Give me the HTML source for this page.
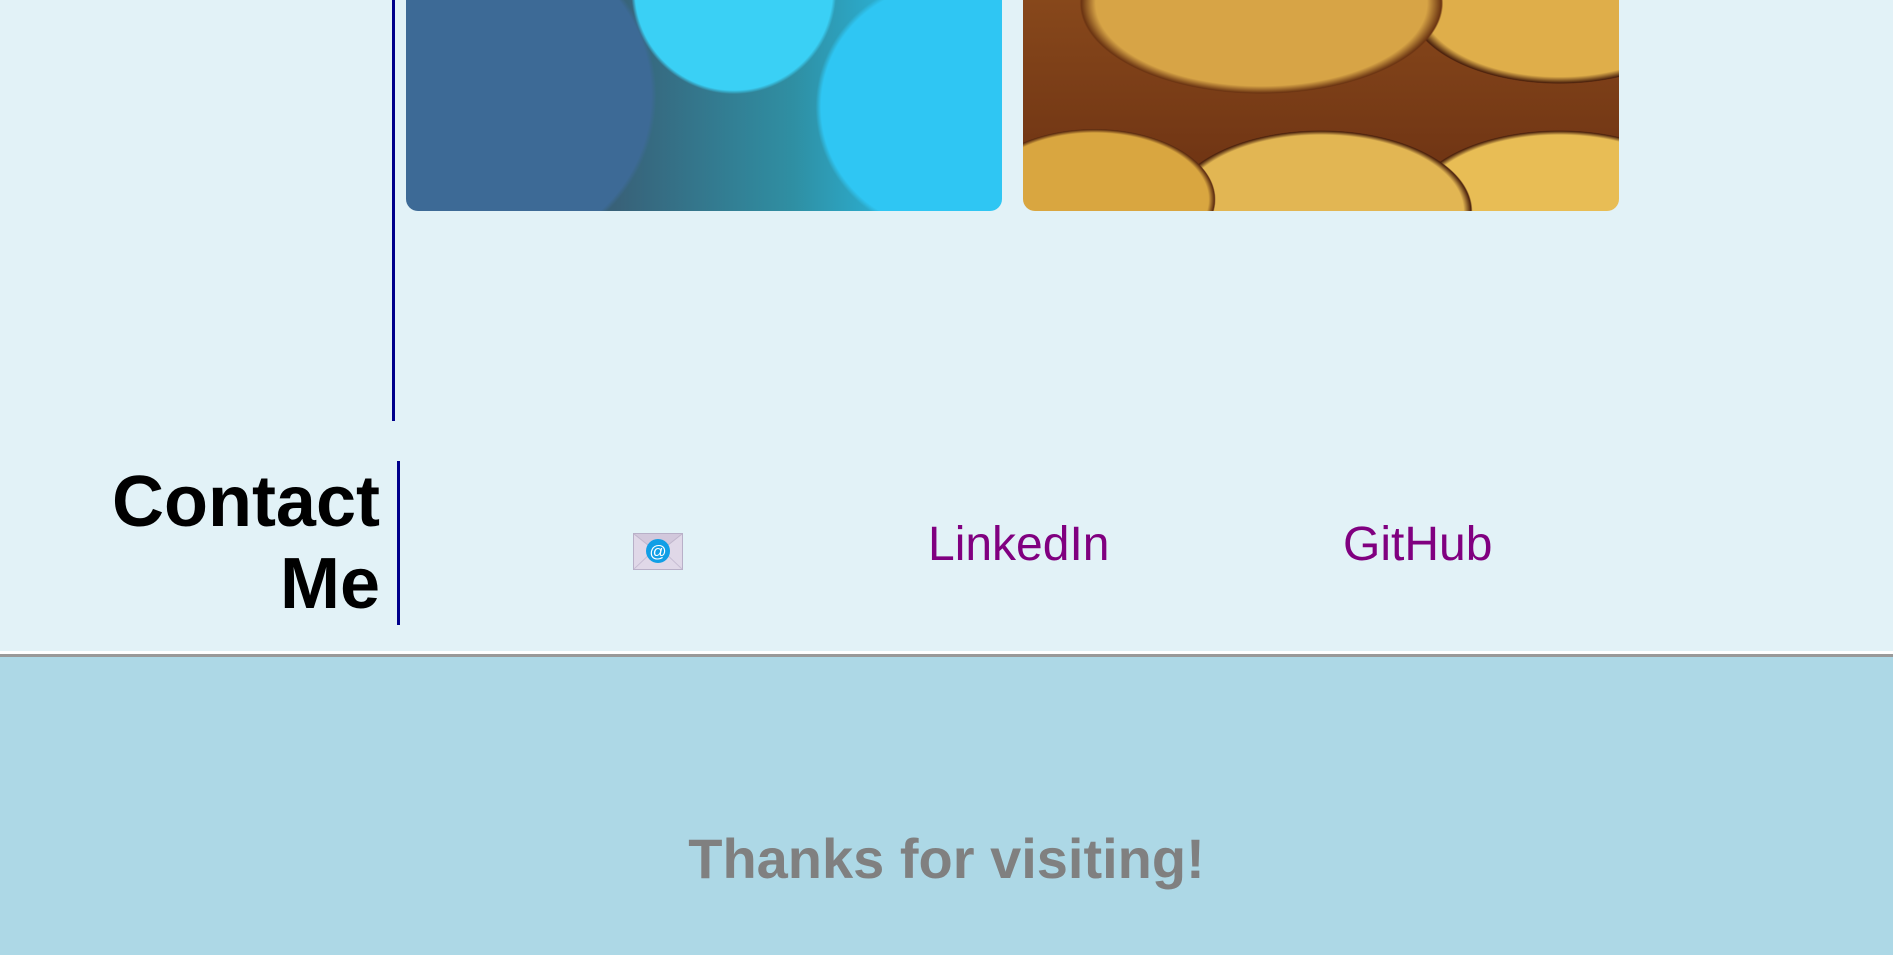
<!DOCTYPE html>
<html><head><meta charset="utf-8"><style>
html,body{margin:0;padding:0;width:1893px;height:955px;overflow:hidden;background:#e2f2f7;font-family:"Liberation Sans",Arial,sans-serif;}
.abs{position:absolute}
.vline{position:absolute;background:#00008b;width:3px}
.img{position:absolute;top:-20px;height:231px;border-radius:0 0 12px 12px;overflow:hidden}
.blue{left:406px;width:596px;background:
radial-gradient(circle at 90% 55%,#2fc6f3 0 22%,transparent 23%),
radial-gradient(circle at 55% 5%,#3ad0f5 0 25%,transparent 26%),
radial-gradient(circle at 15% 50%,#3d6a96 0 30%,transparent 31%),
linear-gradient(90deg,#3b5f90 0%,#386178 35%,#2f8fa3 65%,#2ab8df 85%,#35c4ef 100%);}
.gold{left:1023px;width:596px;background:
radial-gradient(ellipse 120px 70px at 12% 95%,#d9a640 0 95%,#5a2a10 100%,transparent 101%),
radial-gradient(ellipse 150px 80px at 50% 100%,#e2b653 0 95%,#4a200c 100%,transparent 101%),
radial-gradient(ellipse 150px 80px at 90% 100%,#e8bd55 0 95%,#4a200c 100%,transparent 101%),
radial-gradient(ellipse 180px 90px at 40% 10%,#d7a446 0 92%,#6b3412 100%,transparent 101%),
radial-gradient(ellipse 150px 80px at 90% 10%,#dfae4a 0 92%,#4a200c 100%,transparent 101%),
linear-gradient(#8a4a1c,#6a3012);}
.link{position:absolute;color:#800080;font-size:48px;line-height:1}
</style></head><body>
<div class="vline" style="left:392px;top:0;height:421px"></div>
<div class="img blue"></div>
<div class="img gold"></div>

<div class="abs" style="right:1513px;top:461px;font-size:72px;font-weight:bold;line-height:82px;text-align:right;color:#000">Contact<br>Me</div>
<div class="vline" style="left:397px;top:461px;height:164px"></div>

<svg class="abs" style="left:633px;top:533px" width="50" height="37" viewBox="0 0 50 37">
<rect x="0.5" y="0.5" width="49" height="36" fill="#e0d8e8" stroke="#b8b0c8"/>
<path d="M1 1 L25 20 L49 1" fill="#d2c8dc" stroke="#c0b6cc"/>
<path d="M1 36 L20 18 M49 36 L30 18" stroke="#c8bed4" fill="none"/>
<circle cx="25" cy="18" r="12" fill="#119fe6"/>
<text x="25" y="24" font-size="17" font-family="Liberation Sans" fill="#fff" text-anchor="middle">@</text>
</svg>
<div class="link" style="left:928px;top:521px">LinkedIn</div>
<div class="link" style="left:1343px;top:521px">GitHub</div>

<div class="abs" style="left:0;top:651px;width:1893px;height:3px;background:#fff"></div>
<div class="abs" style="left:0;top:654px;width:1893px;height:3px;background:#999"></div>
<div class="abs" style="left:0;top:657px;width:1893px;height:298px;background:#add8e6"></div>
<div class="abs" style="left:0;top:827px;width:1893px;text-align:center;font-size:56px;font-weight:bold;color:#808080;line-height:64px">Thanks for visiting!</div>
</body></html>
